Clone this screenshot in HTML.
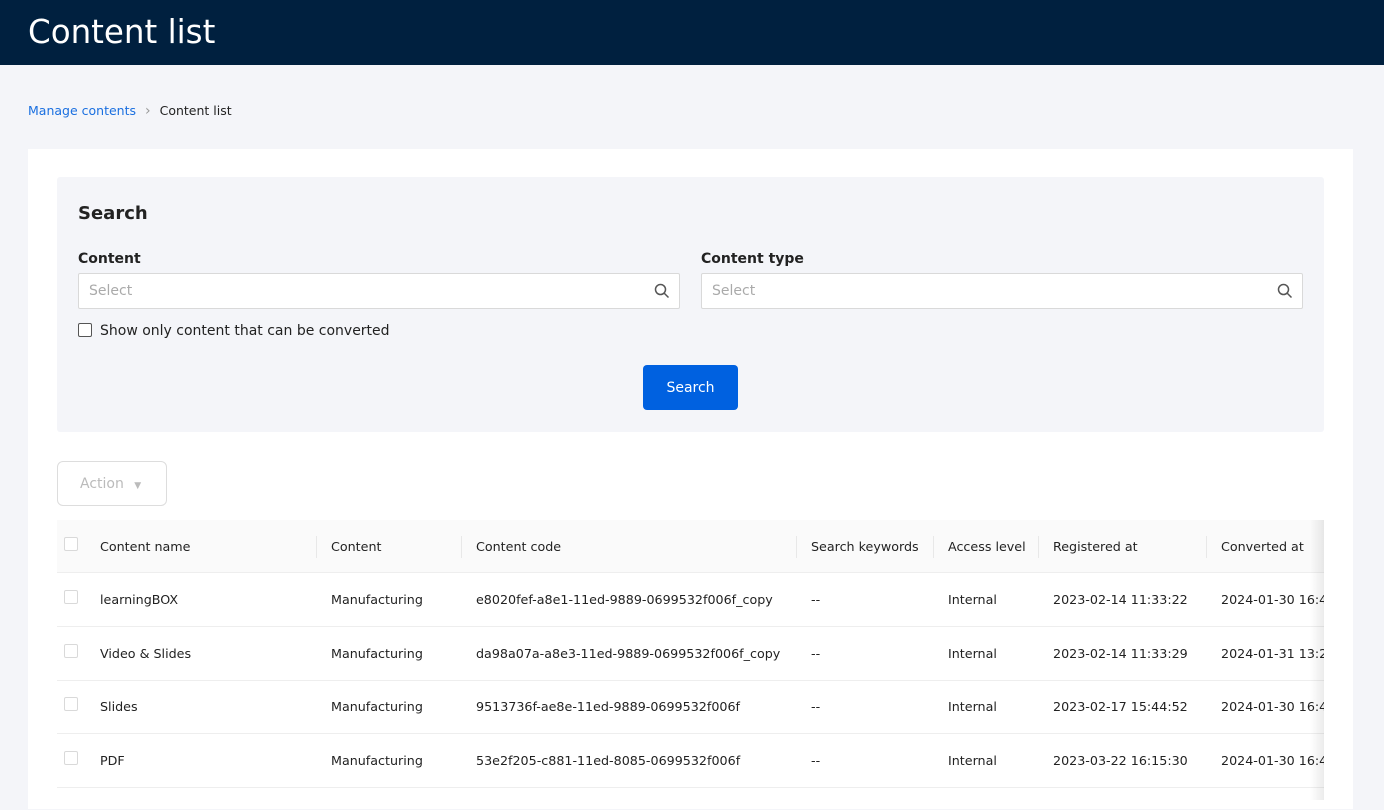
<!DOCTYPE html>
<html><head><meta charset="utf-8"><style>
*{box-sizing:border-box;margin:0;padding:0}
body{width:1384px;height:798px;overflow:hidden;background:#f4f5f9;font-family:"DejaVu Sans","Liberation Sans",sans-serif;color:#222;position:relative}
.hdr{position:absolute;left:0;top:0;width:1384px;height:65px;background:#00203f;color:#fff;font-size:32.5px;padding:13px 0 0 28px}
.bc{position:absolute;left:28px;top:103px;font-size:12.5px;color:#222}
.bc a{color:#1a6fe0;text-decoration:none}
.bc span{color:#999;margin:0 9px;font-size:14px}
.card{position:absolute;left:28px;top:149px;width:1325px;height:660px;background:#fff}
.sp{position:absolute;left:57px;top:177px;width:1267px;height:255px;background:#f4f5f9;border-radius:3px}
.abs{position:absolute}
.lbl{font-size:14px;font-weight:bold}
.inp{position:absolute;width:602px;height:36px;background:#fff;border:1px solid #d9d9d9;border-radius:2px;font-size:14px;color:#aaa;padding:9px 10px}
.inp svg{position:absolute;right:9px;top:9px}
.btn{position:absolute;left:643px;top:365px;width:95px;height:45px;background:#0061e0;border-radius:4px;color:#fff;font-size:14px;text-align:center;line-height:47px}
.act{position:absolute;left:57px;top:461px;width:110px;height:45px;border:1px solid #ddd;border-radius:6px;color:#bbb;font-size:14px;padding:14px 0 0 22px}
.tbl{position:absolute;left:57px;top:520px;width:1267px;height:290px;overflow:hidden;font-size:12.7px}
.th{position:absolute;left:0;top:0;width:1267px;height:53px;background:#fafafa;border-bottom:1px solid #eee}
.row{position:absolute;left:0;width:1267px;height:54px;border-bottom:1px solid #eee}
.c{position:absolute;top:19px;white-space:nowrap}
.cb{position:absolute;left:7px;width:14px;height:14px;border:1px solid #d9d9d9;border-radius:2px;background:#fff}
.dv{position:absolute;top:16px;width:1px;height:22px;background:#e8e8e8}
.sh{position:absolute;left:1310px;top:520px;width:14px;height:280px;background:linear-gradient(to right,rgba(0,0,0,0),rgba(0,0,0,0.08))}
</style></head><body>
<div class="hdr">Content list</div>
<div class="bc"><a>Manage contents</a><span>›</span>Content list</div>
<div class="card"></div>
<div class="sp">
<div class="abs" style="left:21px;top:26px;font-size:18px;font-weight:bold">Search</div>
<div class="abs lbl" style="left:21px;top:74px">Content</div>
<div class="abs lbl" style="left:644px;top:74px">Content type</div>
<div class="inp" style="left:21px;top:96px">Select<svg width="16" height="16" viewBox="0 0 16 16"><circle cx="6.5" cy="6.5" r="5" fill="none" stroke="#555" stroke-width="1.5"/><path d="M10 10l4.5 4.5" stroke="#555" stroke-width="1.5"/></svg></div>
<div class="inp" style="left:644px;top:96px">Select<svg width="16" height="16" viewBox="0 0 16 16"><circle cx="6.5" cy="6.5" r="5" fill="none" stroke="#555" stroke-width="1.5"/><path d="M10 10l4.5 4.5" stroke="#555" stroke-width="1.5"/></svg></div>
<div class="abs" style="left:21px;top:146px;width:14px;height:14px;border:1px solid #555;border-radius:2px;background:#fff"></div>
<div class="abs" style="left:43px;top:146px;font-size:14px">Show only content that can be converted</div>
</div>
<div class="btn">Search</div>
<div class="act">Action <span style="font-size:9px;margin-left:6px">▼</span></div>
<div class="tbl">
<div class="th"><div class="cb" style="top:17px"></div>
<div class="c" style="left:43px">Content name</div><div class="dv" style="left:259px"></div>
<div class="c" style="left:274px">Content</div><div class="dv" style="left:404px"></div>
<div class="c" style="left:419px">Content code</div><div class="dv" style="left:739px"></div>
<div class="c" style="left:754px">Search keywords</div><div class="dv" style="left:876px"></div>
<div class="c" style="left:891px">Access level</div><div class="dv" style="left:981px"></div>
<div class="c" style="left:996px">Registered at</div><div class="dv" style="left:1149px"></div>
<div class="c" style="left:1164px">Converted at</div></div>
<div class="row" style="top:53px"><div class="cb" style="top:17px"></div><div class="c" style="left:43px">learningBOX</div><div class="c" style="left:274px">Manufacturing</div><div class="c" style="left:419px">e8020fef-a8e1-11ed-9889-0699532f006f_copy</div><div class="c" style="left:754px">--</div><div class="c" style="left:891px">Internal</div><div class="c" style="left:996px">2023-02-14 11:33:22</div><div class="c" style="left:1164px">2024-01-30 16:41</div></div>
<div class="row" style="top:107px"><div class="cb" style="top:17px"></div><div class="c" style="left:43px">Video &amp; Slides</div><div class="c" style="left:274px">Manufacturing</div><div class="c" style="left:419px">da98a07a-a8e3-11ed-9889-0699532f006f_copy</div><div class="c" style="left:754px">--</div><div class="c" style="left:891px">Internal</div><div class="c" style="left:996px">2023-02-14 11:33:29</div><div class="c" style="left:1164px">2024-01-31 13:21</div></div>
<div class="row" style="top:160px"><div class="cb" style="top:17px"></div><div class="c" style="left:43px">Slides</div><div class="c" style="left:274px">Manufacturing</div><div class="c" style="left:419px">9513736f-ae8e-11ed-9889-0699532f006f</div><div class="c" style="left:754px">--</div><div class="c" style="left:891px">Internal</div><div class="c" style="left:996px">2023-02-17 15:44:52</div><div class="c" style="left:1164px">2024-01-30 16:41</div></div>
<div class="row" style="top:214px"><div class="cb" style="top:17px"></div><div class="c" style="left:43px">PDF</div><div class="c" style="left:274px">Manufacturing</div><div class="c" style="left:419px">53e2f205-c881-11ed-8085-0699532f006f</div><div class="c" style="left:754px">--</div><div class="c" style="left:891px">Internal</div><div class="c" style="left:996px">2023-03-22 16:15:30</div><div class="c" style="left:1164px">2024-01-30 16:41</div></div>
</div>
<div class="sh"></div>
</body></html>
